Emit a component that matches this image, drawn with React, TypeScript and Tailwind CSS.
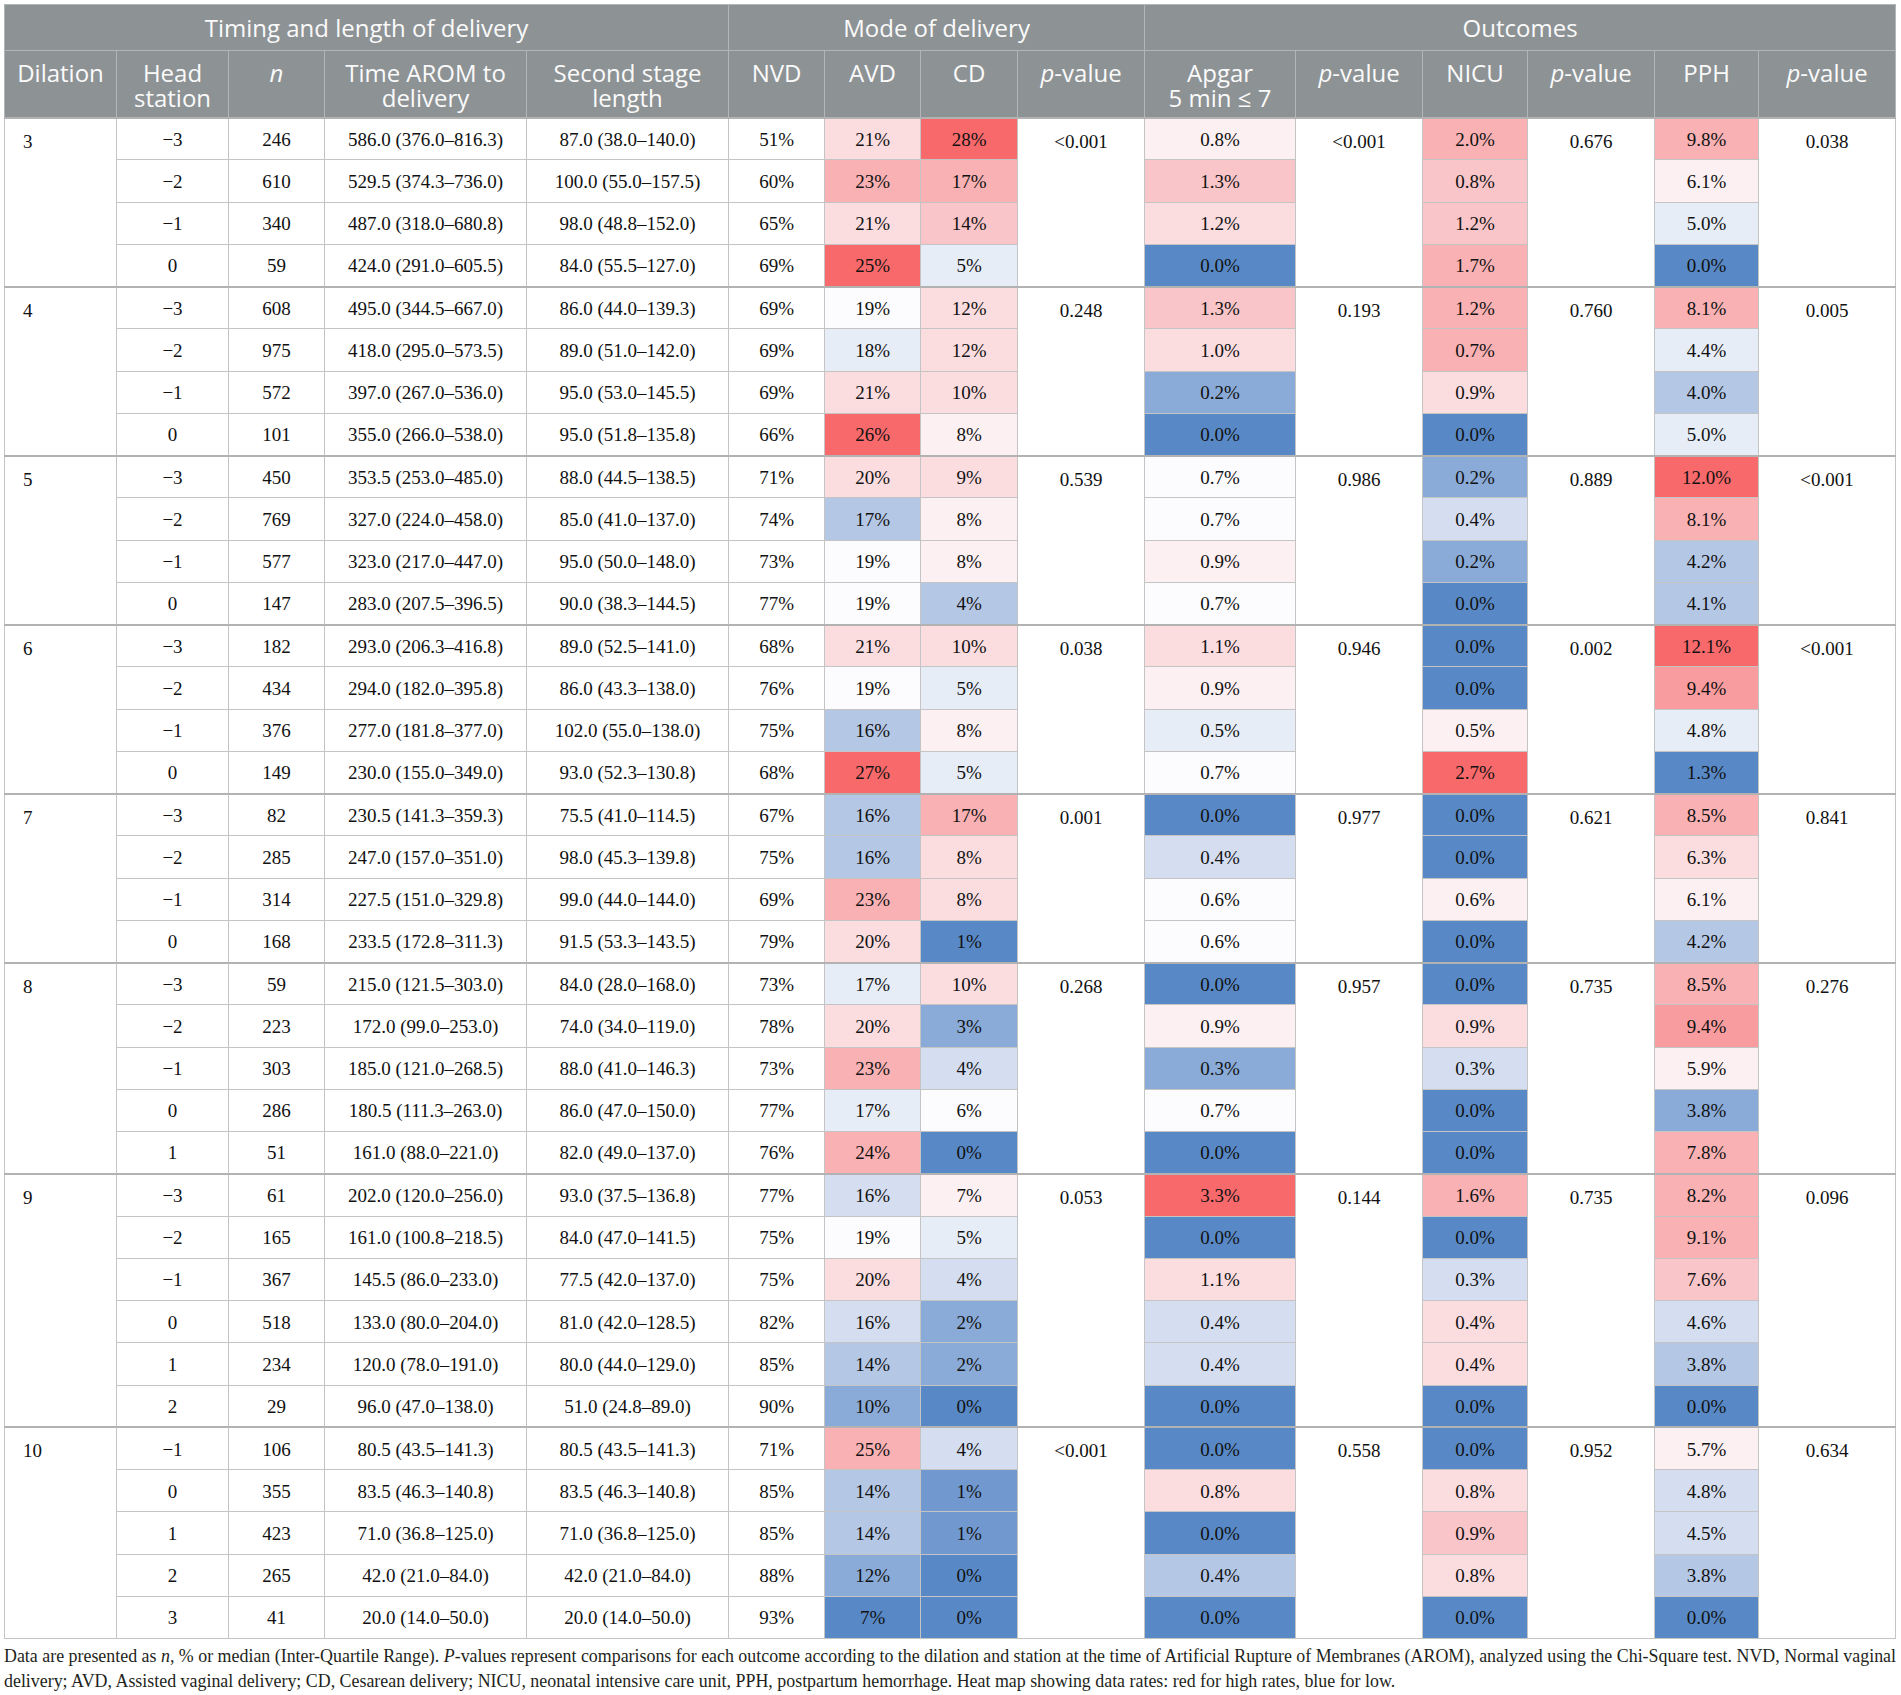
import React from 'react';

// heat map shades, red for high rates and blue for low
const HEAT: Record<string, string> = {
  R5: 'bg-[#f8696b]',
  R4: 'bg-[#f99c9f]',
  R3: 'bg-[#f9b1b4]',
  R2: 'bg-[#fac5c8]',
  R1: 'bg-[#fbdde0]',
  R0: 'bg-[#fcf0f2]',
  W: 'bg-[#fcfcfe]',
  B0: 'bg-[#e7edf7]',
  B1: 'bg-[#d5def0]',
  B2: 'bg-[#b4c7e5]',
  B3: 'bg-[#8aabd7]',
  B4: 'bg-[#7299cf]',
  B5: 'bg-[#5889c6]',
};

type Group = {
  dil: string;
  p: [string, string, string, string];
  rows: string[][];
};

// station, n, AROM, second stage, NVD, AVD, CD, Apgar, NICU, PPH  ("value shade")
const groups: Group[] = [
  {
    dil: '3',
    p: ['<0.001', '<0.001', '0.676', '0.038'],
    rows: [
      ['−3', '246', '586.0 (376.0–816.3)', '87.0 (38.0–140.0)', '51%', '21% R1', '28% R5', '0.8% R0', '2.0% R3', '9.8% R3'],
      ['−2', '610', '529.5 (374.3–736.0)', '100.0 (55.0–157.5)', '60%', '23% R3', '17% R3', '1.3% R2', '0.8% R2', '6.1% R0'],
      ['−1', '340', '487.0 (318.0–680.8)', '98.0 (48.8–152.0)', '65%', '21% R1', '14% R2', '1.2% R1', '1.2% R2', '5.0% B0'],
      ['0', '59', '424.0 (291.0–605.5)', '84.0 (55.5–127.0)', '69%', '25% R5', '5% B0', '0.0% B5', '1.7% R3', '0.0% B5'],
    ],
  },
  {
    dil: '4',
    p: ['0.248', '0.193', '0.760', '0.005'],
    rows: [
      ['−3', '608', '495.0 (344.5–667.0)', '86.0 (44.0–139.3)', '69%', '19% W', '12% R1', '1.3% R2', '1.2% R3', '8.1% R3'],
      ['−2', '975', '418.0 (295.0–573.5)', '89.0 (51.0–142.0)', '69%', '18% B0', '12% R1', '1.0% R1', '0.7% R3', '4.4% B0'],
      ['−1', '572', '397.0 (267.0–536.0)', '95.0 (53.0–145.5)', '69%', '21% R1', '10% R1', '0.2% B3', '0.9% R1', '4.0% B2'],
      ['0', '101', '355.0 (266.0–538.0)', '95.0 (51.8–135.8)', '66%', '26% R5', '8% R0', '0.0% B5', '0.0% B5', '5.0% B0'],
    ],
  },
  {
    dil: '5',
    p: ['0.539', '0.986', '0.889', '<0.001'],
    rows: [
      ['−3', '450', '353.5 (253.0–485.0)', '88.0 (44.5–138.5)', '71%', '20% R1', '9% R1', '0.7% W', '0.2% B3', '12.0% R5'],
      ['−2', '769', '327.0 (224.0–458.0)', '85.0 (41.0–137.0)', '74%', '17% B2', '8% R0', '0.7% W', '0.4% B1', '8.1% R3'],
      ['−1', '577', '323.0 (217.0–447.0)', '95.0 (50.0–148.0)', '73%', '19% W', '8% R0', '0.9% R0', '0.2% B3', '4.2% B2'],
      ['0', '147', '283.0 (207.5–396.5)', '90.0 (38.3–144.5)', '77%', '19% W', '4% B2', '0.7% W', '0.0% B5', '4.1% B2'],
    ],
  },
  {
    dil: '6',
    p: ['0.038', '0.946', '0.002', '<0.001'],
    rows: [
      ['−3', '182', '293.0 (206.3–416.8)', '89.0 (52.5–141.0)', '68%', '21% R1', '10% R1', '1.1% R1', '0.0% B5', '12.1% R5'],
      ['−2', '434', '294.0 (182.0–395.8)', '86.0 (43.3–138.0)', '76%', '19% W', '5% B0', '0.9% R0', '0.0% B5', '9.4% R4'],
      ['−1', '376', '277.0 (181.8–377.0)', '102.0 (55.0–138.0)', '75%', '16% B2', '8% R0', '0.5% B0', '0.5% R0', '4.8% B0'],
      ['0', '149', '230.0 (155.0–349.0)', '93.0 (52.3–130.8)', '68%', '27% R5', '5% B0', '0.7% W', '2.7% R5', '1.3% B5'],
    ],
  },
  {
    dil: '7',
    p: ['0.001', '0.977', '0.621', '0.841'],
    rows: [
      ['−3', '82', '230.5 (141.3–359.3)', '75.5 (41.0–114.5)', '67%', '16% B2', '17% R3', '0.0% B5', '0.0% B5', '8.5% R3'],
      ['−2', '285', '247.0 (157.0–351.0)', '98.0 (45.3–139.8)', '75%', '16% B2', '8% R1', '0.4% B1', '0.0% B5', '6.3% R1'],
      ['−1', '314', '227.5 (151.0–329.8)', '99.0 (44.0–144.0)', '69%', '23% R3', '8% R1', '0.6% W', '0.6% R0', '6.1% R0'],
      ['0', '168', '233.5 (172.8–311.3)', '91.5 (53.3–143.5)', '79%', '20% R1', '1% B5', '0.6% W', '0.0% B5', '4.2% B2'],
    ],
  },
  {
    dil: '8',
    p: ['0.268', '0.957', '0.735', '0.276'],
    rows: [
      ['−3', '59', '215.0 (121.5–303.0)', '84.0 (28.0–168.0)', '73%', '17% B0', '10% R1', '0.0% B5', '0.0% B5', '8.5% R3'],
      ['−2', '223', '172.0 (99.0–253.0)', '74.0 (34.0–119.0)', '78%', '20% R1', '3% B3', '0.9% R0', '0.9% R1', '9.4% R4'],
      ['−1', '303', '185.0 (121.0–268.5)', '88.0 (41.0–146.3)', '73%', '23% R3', '4% B1', '0.3% B3', '0.3% B1', '5.9% R0'],
      ['0', '286', '180.5 (111.3–263.0)', '86.0 (47.0–150.0)', '77%', '17% B0', '6% W', '0.7% W', '0.0% B5', '3.8% B3'],
      ['1', '51', '161.0 (88.0–221.0)', '82.0 (49.0–137.0)', '76%', '24% R3', '0% B5', '0.0% B5', '0.0% B5', '7.8% R3'],
    ],
  },
  {
    dil: '9',
    p: ['0.053', '0.144', '0.735', '0.096'],
    rows: [
      ['−3', '61', '202.0 (120.0–256.0)', '93.0 (37.5–136.8)', '77%', '16% B1', '7% R0', '3.3% R5', '1.6% R3', '8.2% R3'],
      ['−2', '165', '161.0 (100.8–218.5)', '84.0 (47.0–141.5)', '75%', '19% W', '5% B0', '0.0% B5', '0.0% B5', '9.1% R3'],
      ['−1', '367', '145.5 (86.0–233.0)', '77.5 (42.0–137.0)', '75%', '20% R1', '4% B1', '1.1% R1', '0.3% B1', '7.6% R2'],
      ['0', '518', '133.0 (80.0–204.0)', '81.0 (42.0–128.5)', '82%', '16% B1', '2% B3', '0.4% B1', '0.4% R1', '4.6% B1'],
      ['1', '234', '120.0 (78.0–191.0)', '80.0 (44.0–129.0)', '85%', '14% B2', '2% B3', '0.4% B1', '0.4% R1', '3.8% B2'],
      ['2', '29', '96.0 (47.0–138.0)', '51.0 (24.8–89.0)', '90%', '10% B3', '0% B5', '0.0% B5', '0.0% B5', '0.0% B5'],
    ],
  },
  {
    dil: '10',
    p: ['<0.001', '0.558', '0.952', '0.634'],
    rows: [
      ['−1', '106', '80.5 (43.5–141.3)', '80.5 (43.5–141.3)', '71%', '25% R3', '4% B1', '0.0% B5', '0.0% B5', '5.7% R0'],
      ['0', '355', '83.5 (46.3–140.8)', '83.5 (46.3–140.8)', '85%', '14% B2', '1% B4', '0.8% R1', '0.8% R1', '4.8% B1'],
      ['1', '423', '71.0 (36.8–125.0)', '71.0 (36.8–125.0)', '85%', '14% B2', '1% B4', '0.0% B5', '0.9% R2', '4.5% B1'],
      ['2', '265', '42.0 (21.0–84.0)', '42.0 (21.0–84.0)', '88%', '12% B3', '0% B5', '0.4% B2', '0.8% R1', '3.8% B2'],
      ['3', '41', '20.0 (14.0–50.0)', '20.0 (14.0–50.0)', '93%', '7% B5', '0% B5', '0.0% B5', '0.0% B5', '0.0% B5'],
    ],
  },
];

const widths = [
  'w-[112px]', 'w-[112px]', 'w-[96px]', 'w-[202px]', 'w-[202px]',
  'w-[96px]', 'w-[96px]', 'w-[97px]', 'w-[127px]',
  'w-[151px]', 'w-[127px]', 'w-[105px]', 'w-[127px]', 'w-[104px]', 'w-[137px]',
];

const th = 'bg-[#8d9295] border border-[#b3b6b8] font-normal text-[#fafafa] px-1';
const colHead = `${th} align-top pt-[9px]`;
const cell = 'border border-[#c4c4c4] h-[42.25px] p-0 pt-[2px] text-center align-middle';
const topCell = 'border border-[#c4c4c4] px-0 pt-[11px] pb-0 text-center align-top';

function PValue() {
  return (
    <>
      <i>p</i>-value
    </>
  );
}

// two-line header label, one block per line
function Lines({ a, b }: { a: React.ReactNode; b: React.ReactNode }) {
  return (
    <>
      <div>{a}</div>
      <div>{b}</div>
    </>
  );
}

function HeatCell({ value, first }: { value: string; first: boolean }) {
  const [text, shade] = value.split(' ');
  return (
    <td className={`${cell} ${HEAT[shade]} ${first ? 'border-t-2 border-t-[#b2b2b2]' : ''}`}>
      {text}
    </td>
  );
}

export default function App() {
  return (
    <div className="min-h-screen bg-white pl-[4px] pt-[4px]">
      <table className="w-[1892px] table-fixed border-collapse border border-[#c4c4c4] font-['Liberation_Serif',serif] text-[19px] leading-[24px] text-[#111]">
        <colgroup>
          {widths.map((w, i) => (
            <col key={i} className={w} />
          ))}
        </colgroup>
        <thead className="font-['Open_Sans',sans-serif] text-[24px] leading-[25px]">
          <tr className="h-[46px]">
            <th colSpan={5} className={th}>Timing and length of delivery</th>
            <th colSpan={4} className={th}>Mode of delivery</th>
            <th colSpan={6} className={th}>Outcomes</th>
          </tr>
          <tr className="h-[67px]">
            <th className={colHead}>Dilation</th>
            <th className={colHead}><Lines a="Head" b="station" /></th>
            <th className={colHead}><i>n</i></th>
            <th className={colHead}><Lines a="Time AROM to" b="delivery" /></th>
            <th className={colHead}><Lines a="Second stage" b="length" /></th>
            <th className={colHead}>NVD</th>
            <th className={colHead}>AVD</th>
            <th className={colHead}>CD</th>
            <th className={colHead}><PValue /></th>
            <th className={colHead}><Lines a="Apgar" b="5 min ≤ 7" /></th>
            <th className={colHead}><PValue /></th>
            <th className={colHead}>NICU</th>
            <th className={colHead}><PValue /></th>
            <th className={colHead}>PPH</th>
            <th className={colHead}><PValue /></th>
          </tr>
        </thead>
        <tbody>
          {groups.map((g) =>
            g.rows.map((r, i) => {
              const first = i === 0;
              const sep = first ? 'border-t-2 border-t-[#b2b2b2]' : '';
              const span = g.rows.length;
              return (
                <tr key={`${g.dil}-${i}`}>
                  {first && (
                    <td rowSpan={span} className={`${topCell} ${sep} !text-left pl-[18px]`}>
                      {g.dil}
                    </td>
                  )}
                  <td className={`${cell} ${sep}`}>{r[0]}</td>
                  <td className={`${cell} ${sep}`}>{r[1]}</td>
                  <td className={`${cell} ${sep}`}>{r[2]}</td>
                  <td className={`${cell} ${sep}`}>{r[3]}</td>
                  <td className={`${cell} ${sep}`}>{r[4]}</td>
                  <HeatCell value={r[5]} first={first} />
                  <HeatCell value={r[6]} first={first} />
                  {first && <td rowSpan={span} className={`${topCell} ${sep}`}>{g.p[0]}</td>}
                  <HeatCell value={r[7]} first={first} />
                  {first && <td rowSpan={span} className={`${topCell} ${sep}`}>{g.p[1]}</td>}
                  <HeatCell value={r[8]} first={first} />
                  {first && <td rowSpan={span} className={`${topCell} ${sep}`}>{g.p[2]}</td>}
                  <HeatCell value={r[9]} first={first} />
                  {first && <td rowSpan={span} className={`${topCell} ${sep}`}>{g.p[3]}</td>}
                </tr>
              );
            })
          )}
        </tbody>
      </table>
      <p className="mt-[5px] w-[1892px] font-['Liberation_Serif',serif] text-[17.9px] leading-[25px] text-[#231f20]">
        Data are presented as <i>n</i>, % or median (Inter-Quartile Range). <i>P</i>-values represent comparisons
        for each outcome according to the dilation and station at the time of Artificial Rupture of Membranes
        (AROM), analyzed using the Chi-Square test. NVD, Normal vaginal
        <br />
        delivery; AVD, Assisted vaginal delivery; CD, Cesarean delivery; NICU, neonatal intensive care unit, PPH,
        postpartum hemorrhage. Heat map showing data rates: red for high rates, blue for low.
      </p>
    </div>
  );
}
